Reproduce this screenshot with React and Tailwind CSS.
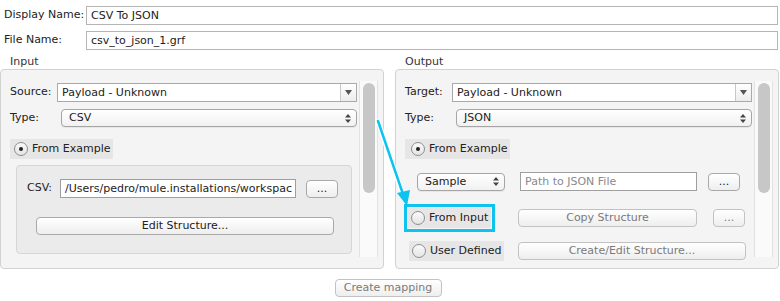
import React from "react";

const font = { fontFamily: '"DejaVu Sans", "Liberation Sans", sans-serif' };

const ComboBox = ({ value, className = "" }) => (
  <div className={`flex h-[19px] items-stretch border border-[#a9a9a9] bg-white ${className}`}>
    <div className="flex-1 pl-[4px] leading-[17px] text-[#222]">{value}</div>
    <div className="flex w-[16px] items-center justify-center border-l border-[#c8c8c8] bg-gradient-to-b from-white to-[#ececec]">
      <svg width="7" height="5" viewBox="0 0 7 5">
        <path d="M0 0h7L3.5 5z" fill="#555" />
      </svg>
    </div>
  </div>
);

const Stepper = () => (
  <svg width="6" height="9" viewBox="0 0 6 9">
    <path d="M0 3.5L3 0l3 3.5z M0 5.5h6L3 9z" fill="#444" />
  </svg>
);

const PopUp = ({ value, className = "" }) => (
  <div
    className={`flex h-[18px] items-center justify-between rounded-[4px] border border-[#a5a5a5] bg-gradient-to-b from-white to-[#f1f1f1] pl-[7px] pr-[5px] shadow-[0_1px_0_rgba(0,0,0,0.05)] ${className}`}
  >
    <span className="leading-[16px] text-[#222]">{value}</span>
    <Stepper />
  </div>
);

const Button = ({ children, disabled, className = "" }) => (
  <div
    className={`flex h-[18px] items-center justify-center rounded-[4px] border border-[#a9a9a9] bg-gradient-to-b from-white to-[#eeeeee] leading-[16px] ${
      disabled ? "text-[#7a7a7a] border-[#c2c2c2]" : "text-[#222]"
    } ${className}`}
  >
    {children}
  </div>
);

const Radio = ({ checked, label, className = "" }) => (
  <div className={`flex h-[20px] w-fit items-center gap-[4px] whitespace-nowrap bg-[#e6e6e6] pl-[3px] pr-[3px] ${className}`}>
    <div className="flex h-[14px] w-[14px] shrink-0 items-center justify-center rounded-full border border-[#8e8e8e] bg-gradient-to-b from-[#fafafa] to-[#e4e4e4]">
      {checked && <div className="h-[4px] w-[4px] rounded-full bg-[#222]" />}
    </div>
    <span className="text-[#222]">{label}</span>
  </div>
);

const Scrollbar = () => (
  <div className="my-[11px] mr-[5px] w-[19px] border-x border-[#e2e2e2] bg-[#fafafa] pt-[2px]">
    <div className="mx-auto h-[110px] w-[12px] rounded-full bg-[#c7c7c7]" />
  </div>
);

const TextField = ({ value, placeholder, className = "" }) => (
  <div
    className={`h-[19px] border border-[#9f9f9f] bg-white pl-[4px] leading-[17px] ${
      placeholder ? "text-[#8a8a8a]" : "text-[#222]"
    } ${className}`}
  >
    {value || placeholder}
  </div>
);

export default function App() {
  return (
    <div className="relative h-[301px] w-[780px] overflow-hidden bg-white text-[11px]" style={font}>
      <div className="flex flex-col gap-[6px] pt-[6px] pl-[4px] pr-[2px]">
        <div className="flex items-center">
          <span className="w-[82px] text-[#222]">Display Name:</span>
          <TextField value="CSV To JSON" className="flex-1 border-[#b5b5b5]" />
        </div>
        <div className="flex items-center">
          <span className="w-[82px] text-[#222]">File Name:</span>
          <TextField value="csv_to_json_1.grf" className="flex-1 border-[#b5b5b5]" />
        </div>
      </div>

      <div className="mt-[5px] flex gap-[11px] pr-[1px]">
        {/* Input */}
        <div className="flex w-[384px] flex-col">
          <div className="h-[14px] pl-[10px] leading-[14px] text-[#333]">Input</div>
          <div className="flex h-[200px] rounded-[4px] border border-[#d2d2d2] bg-[#f4f4f4]">
            <div className="flex flex-1 flex-col pt-[13px] pl-[9px] pr-[2px]">
              <div className="flex items-center">
                <span className="w-[47px] text-[#222]">Source:</span>
                <ComboBox value="Payload - Unknown" className="flex-1" />
              </div>
              <div className="mt-[7px] flex items-center">
                <span className="w-[51px] text-[#222]">Type:</span>
                <PopUp value="CSV" className="flex-1" />
              </div>
              <Radio checked label="From Example" className="mt-[12px] pl-[4px]" />
              <div className="mt-[6px] mr-[5px] ml-[6px] flex h-[89px] flex-col rounded-[4px] border border-[#d6d6d6] bg-[#ebebeb] pt-[13px] pl-[10px] pr-[13px]">
                <div className="flex items-center">
                  <span className="w-[33px] text-[#222]">CSV:</span>
                  <TextField value="/Users/pedro/mule.installations/workspac" className="w-[236px] overflow-hidden whitespace-nowrap" />
                  <Button className="ml-[10px] w-[32px]">...</Button>
                </div>
                <Button className="mt-[19px] ml-[9px] w-[298px]">Edit Structure...</Button>
              </div>
            </div>
            <Scrollbar />
          </div>
        </div>

        {/* Output */}
        <div className="flex w-[384px] flex-col">
          <div className="h-[14px] pl-[10px] leading-[14px] text-[#333]">Output</div>
          <div className="flex h-[200px] rounded-[4px] border border-[#d2d2d2] bg-[#f4f4f4]">
            <div className="flex flex-1 flex-col pt-[13px] pl-[9px] pr-[2px]">
              <div className="flex items-center">
                <span className="w-[47px] text-[#222]">Target:</span>
                <ComboBox value="Payload - Unknown" className="flex-1" />
              </div>
              <div className="mt-[7px] flex items-center">
                <span className="w-[51px] text-[#222]">Type:</span>
                <PopUp value="JSON" className="flex-1" />
              </div>
              <Radio checked label="From Example" className="mt-[12px] pl-[6px]" />
              <div className="mt-[13px] flex items-center pl-[12px]">
                <PopUp value="Sample" className="w-[88px]" />
                <TextField placeholder="Path to JSON File" className="ml-[15px] w-[177px]" />
                <Button className="ml-[11px] w-[32px]">...</Button>
              </div>
              <div className="mt-[13px] flex items-center">
                <div className="w-[113px]">
                  <div className="-ml-[1px] w-fit border-[3px] border-[#0ec4ee] p-[1px]">
                    <Radio label="From Input" />
                  </div>
                </div>
                <Button disabled className="w-[179px]">Copy Structure</Button>
                <Button disabled className="ml-[16px] w-[32px]">...</Button>
              </div>
              <div className="mt-[9px] flex items-center">
                <div className="w-[113px] pl-[4px]">
                  <Radio label="User Defined" />
                </div>
                <Button disabled className="w-[228px]">Create/Edit Structure...</Button>
              </div>
            </div>
            <Scrollbar />
          </div>
        </div>
      </div>

      <div className="mt-[10px] flex justify-center pr-[4px]">
        <Button disabled className="w-[107px]">Create mapping</Button>
      </div>

      {/* annotation arrow */}
      <svg className="pointer-events-none absolute left-0 top-0" width="780" height="301">
        <line x1="378" y1="121" x2="404" y2="199" stroke="white" strokeWidth="5" strokeLinecap="round" />
        <line x1="378" y1="121" x2="404" y2="197" stroke="#0ec4ee" strokeWidth="2.5" strokeLinecap="round" />
        <path d="M407 206 L397 193 L410 190 Z" fill="#0ec4ee" />
      </svg>
    </div>
  );
}
